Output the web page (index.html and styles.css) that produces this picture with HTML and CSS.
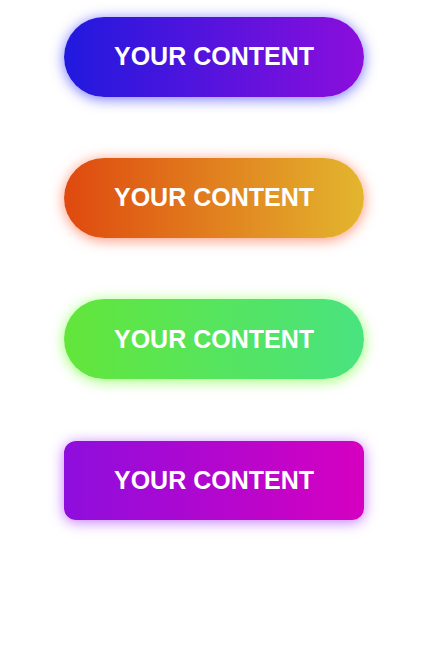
FILE: index.html
```html
<!DOCTYPE html>
<html>
<head>
<meta charset="utf-8">
<link rel="stylesheet" href="styles.css">
</head>
<body>
<div class="stack">
  <button class="btn btn-blue">YOUR CONTENT</button>
  <button class="btn btn-orange">YOUR CONTENT</button>
  <button class="btn btn-green">YOUR CONTENT</button>
  <button class="btn btn-purple">YOUR CONTENT</button>
</div>
</body>
</html>
```

FILE: styles.css
```css
html, body {
  margin: 0;
  padding: 0;
  background: #ffffff;
}
.stack {
  display: flex;
  flex-direction: column;
  align-items: flex-start;
  gap: 61.7px;
  padding: 17px 0 60px 64px;
}
.btn {
  width: 300px;
  height: 79.5px;
  border: none;
  border-radius: 40px;
  color: #ffffff;
  font-family: "Liberation Sans", Arial, sans-serif;
  font-weight: bold;
  font-size: 25px;
  display: flex;
  align-items: center;
  justify-content: center;
  padding: 0;
  margin: 0;
}
.btn-blue {
  background: linear-gradient(90deg, #2119de, #8c0edc);
  box-shadow: 0 2px 14px rgba(70, 70, 255, 0.75);
}
.btn-orange {
  background: linear-gradient(90deg, #df490f, #e3b62e);
  box-shadow: 0 2px 14px rgba(255, 100, 60, 0.7);
}
.btn-green {
  background: linear-gradient(90deg, #63e63a, #49e380);
  box-shadow: 0 2px 14px rgba(120, 255, 60, 0.75);
}
.btn-purple {
  background: linear-gradient(90deg, #8e0edd, #d600c0);
  border-radius: 12px;
  box-shadow: 0 2px 14px rgba(170, 60, 255, 0.7);
}
```
